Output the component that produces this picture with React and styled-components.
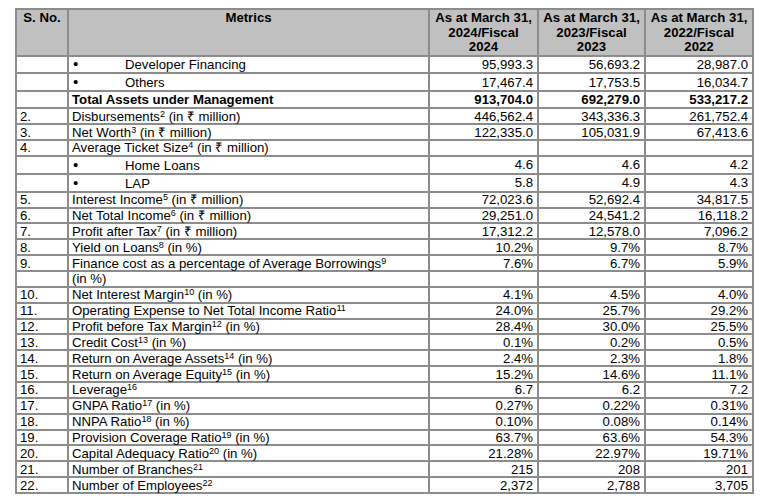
import React from 'react';
import styled, { createGlobalStyle } from 'styled-components';

const GlobalStyle = createGlobalStyle`
  html, body {
    margin: 0;
    padding: 0;
    background: #ffffff;
  }
  body {
    font-family: "Liberation Sans", Arial, sans-serif;
    color: #000;
  }
`;

const Page = styled.div`
  padding: 8px 0 0 15px;
  width: 737px;
`;

const Table = styled.table`
  width: 737px;
  border-collapse: collapse;
  table-layout: fixed;
  font-size: 13.2px;
  border: 2px solid #8c8c8c;
`;

const HeadCell = styled.th`
  background: #c0c0c0;
  border: 2px solid #8c8c8c;
  font-weight: bold;
  font-size: 13.2px;
  line-height: 14.5px;
  text-align: center;
  vertical-align: top;
  padding: 1px 4px 0;
  height: 42px;
  box-sizing: border-box;
`;

const Row = styled.tr`
  height: ${p => p.$h || 15.86}px;
`;

const Cell = styled.td`
  border: 2px solid #8c8c8c;
  padding: 0 4px 0 3px;
  line-height: 13px;
  white-space: nowrap;
  overflow: visible;
  text-align: ${p => (p.$num ? 'right' : 'left')};
  font-weight: ${p => (p.$bold ? 'bold' : 'normal')};
  vertical-align: middle;
`;

const Bullet = styled.span`
  display: inline-block;
  width: 52px;
  padding-left: 1px;
  font-size: 15px;
`;

const Sup = styled.sup`
  font-size: 9px;
  line-height: 0;
  vertical-align: 4px;
`;

const Notes = styled.div`
  font-size: 13.2px;
  padding-top: 1px;
`;

const rows = [
  { n: '', m: 'Developer Financing', bullet: true, v: ['95,993.3', '56,693.2', '28,987.0'], h: 17.5 },
  { n: '', m: 'Others', bullet: true, v: ['17,467.4', '17,753.5', '16,034.7'], h: 18 },
  { n: '', m: 'Total Assets under Management', bold: true, v: ['913,704.0', '692,279.0', '533,217.2'], h: 17.3 },
  { n: '2.', m: 'Disbursements', s: '2', tail: ' (in ₹ million)', v: ['446,562.4', '343,336.3', '261,752.4'] },
  { n: '3.', m: 'Net Worth', s: '3', tail: ' (in ₹ million)', v: ['122,335.0', '105,031.9', '67,413.6'] },
  { n: '4.', m: 'Average Ticket Size', s: '4', tail: ' (in ₹ million)', v: ['', '', ''] },
  { n: '', m: 'Home Loans', bullet: true, v: ['4.6', '4.6', '4.2'], h: 18 },
  { n: '', m: 'LAP', bullet: true, v: ['5.8', '4.9', '4.3'], h: 17.8 },
  { n: '5.', m: 'Interest Income', s: '5', tail: ' (in ₹ million)', v: ['72,023.6', '52,692.4', '34,817.5'] },
  { n: '6.', m: 'Net Total Income', s: '6', tail: ' (in ₹ million)', v: ['29,251.0', '24,541.2', '16,118.2'] },
  { n: '7.', m: 'Profit after Tax', s: '7', tail: ' (in ₹ million)', v: ['17,312.2', '12,578.0', '7,096.2'] },
  { n: '8.', m: 'Yield on Loans', s: '8', tail: ' (in %)', v: ['10.2%', '9.7%', '8.7%'] },
  { n: '9.', m: 'Finance cost as a percentage of Average Borrowings', s: '9', v: ['7.6%', '6.7%', '5.9%'] },
  { n: '', m: '(in %)', v: ['', '', ''] },
  { n: '10.', m: 'Net Interest Margin', s: '10', tail: ' (in %)', v: ['4.1%', '4.5%', '4.0%'] },
  { n: '11.', m: 'Operating Expense to Net Total Income Ratio', s: '11', v: ['24.0%', '25.7%', '29.2%'] },
  { n: '12.', m: 'Profit before Tax Margin', s: '12', tail: ' (in %)', v: ['28.4%', '30.0%', '25.5%'] },
  { n: '13.', m: 'Credit Cost', s: '13', tail: ' (in %)', v: ['0.1%', '0.2%', '0.5%'] },
  { n: '14.', m: 'Return on Average Assets', s: '14', tail: ' (in %)', v: ['2.4%', '2.3%', '1.8%'] },
  { n: '15.', m: 'Return on Average Equity', s: '15', tail: ' (in %)', v: ['15.2%', '14.6%', '11.1%'] },
  { n: '16.', m: 'Leverage', s: '16', v: ['6.7', '6.2', '7.2'] },
  { n: '17.', m: 'GNPA Ratio', s: '17', tail: ' (in %)', v: ['0.27%', '0.22%', '0.31%'] },
  { n: '18.', m: 'NNPA Ratio', s: '18', tail: ' (in %)', v: ['0.10%', '0.08%', '0.14%'] },
  { n: '19.', m: 'Provision Coverage Ratio', s: '19', tail: ' (in %)', v: ['63.7%', '63.6%', '54.3%'] },
  { n: '20.', m: 'Capital Adequacy Ratio', s: '20', tail: ' (in %)', v: ['21.28%', '22.97%', '19.71%'] },
  { n: '21.', m: 'Number of Branches', s: '21', v: ['215', '208', '201'] },
  { n: '22.', m: 'Number of Employees', s: '22', v: ['2,372', '2,788', '3,705'] },
];

const years = ['2024', '2023', '2022'];

export default function App() {
  return (
    <Page>
      <GlobalStyle />
      <Table>
        <colgroup>
          <col style={{ width: 52 }} />
          <col style={{ width: 361 }} />
          <col style={{ width: 109 }} />
          <col style={{ width: 107 }} />
          <col style={{ width: 108 }} />
        </colgroup>
        <thead>
          <tr>
            <HeadCell>S. No.</HeadCell>
            <HeadCell>Metrics</HeadCell>
            {years.map(y => (
              <HeadCell key={y}>
                As at March 31,
                <br />
                {y}/Fiscal
                <br />
                {y}
              </HeadCell>
            ))}
          </tr>
        </thead>
        <tbody>
          {rows.map((r, i) => (
            <Row key={i} $h={r.h}>
              <Cell>{r.n}</Cell>
              <Cell $bold={r.bold}>
                {r.bullet && <Bullet>•</Bullet>}
                {r.m}
                {r.s && <Sup>{r.s}</Sup>}
                {r.tail}
              </Cell>
              {r.v.map((v, j) => (
                <Cell key={j} $num $bold={r.bold}>
                  {v}
                </Cell>
              ))}
            </Row>
          ))}
        </tbody>
      </Table>
      <Notes>Notes:</Notes>
    </Page>
  );
}
